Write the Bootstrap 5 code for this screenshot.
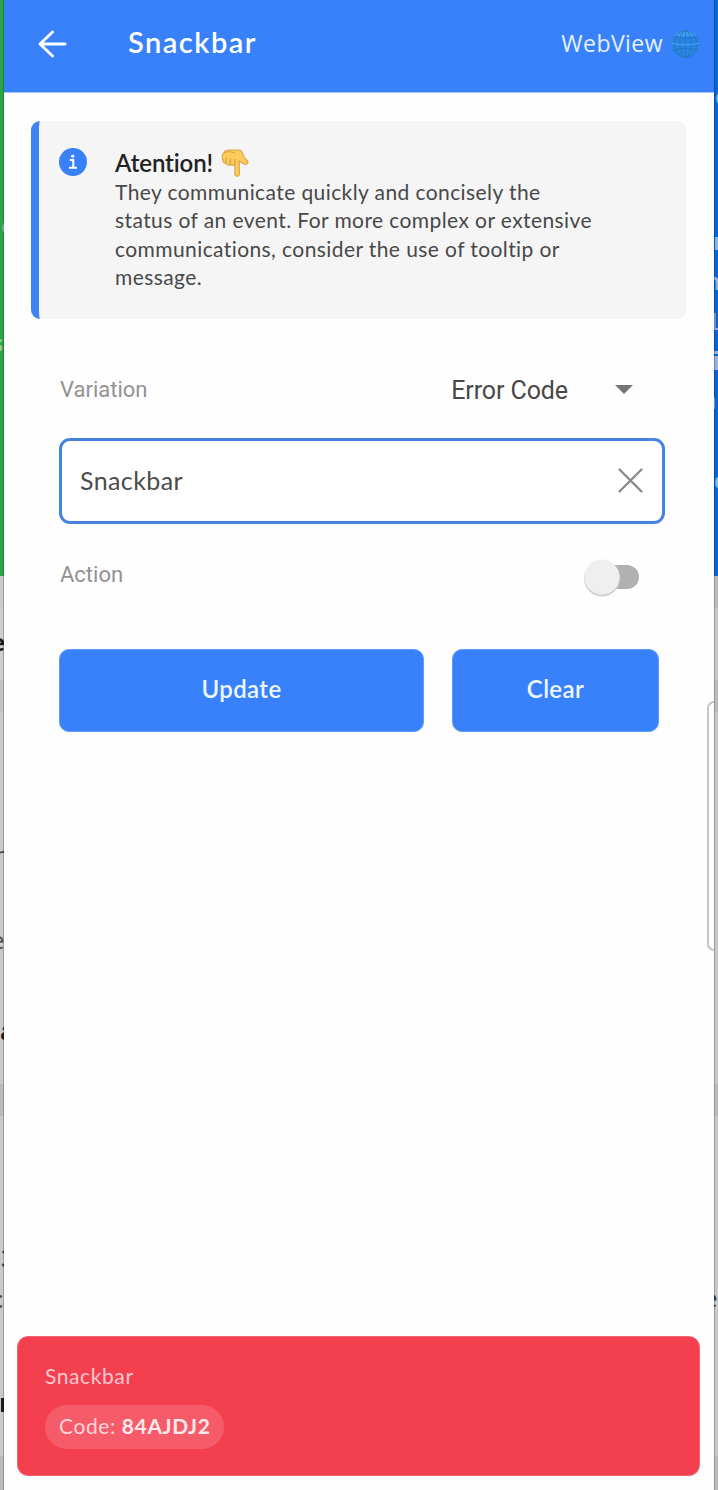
<!DOCTYPE html>
<html lang="en">
<head>
<meta charset="utf-8">
<meta name="viewport" content="width=device-width, initial-scale=1">
<title>Snackbar</title>
<link href="https://cdn.jsdelivr.net/npm/bootstrap@5.3.0/dist/css/bootstrap.min.css" rel="stylesheet">
<style>
body{font-family:Lato,"Open Sans",sans-serif;background:#fff;overflow:hidden}
svg{display:block;flex:none}
.shell{height:1490px}
.screen{min-width:0;background:#fefefe}
.top-bar{height:93px;background:#3881fb;border-bottom:1px solid #a3c9fd;padding:0 14px 5px 33px}
.top-title{font-size:29px;font-weight:600;letter-spacing:1.5px;line-height:36px;margin-left:61px;padding-bottom:3px}
.web-link{font-family:"Open Sans",sans-serif;font-size:23px;letter-spacing:.45px;color:#e4f1ff;line-height:32px;gap:8px}
.web-link span{padding-bottom:1px}
.notice{margin:28px 28px 0 27px;height:198px;background:#f5f5f5;border-left:8px solid #3d83f5;border-radius:9px;padding:27px 60px 0 20px;gap:28px}
.notice-title{font-size:24px;font-weight:600;line-height:30px;color:#222;letter-spacing:-.1px;gap:8px}
.notice-text{font-size:21px;line-height:28.3px;color:#484848;letter-spacing:.41px;white-space:nowrap}
.form-area{padding:0 49px 0 55px}
.device-label{font-family:Roboto,sans-serif;font-size:22px;line-height:30px;color:#929292;margin-left:1px}
.variation{margin-top:56px;height:30px;padding-right:32px}
.variation-value{font-family:Roboto,sans-serif;font-size:25px;color:#484848;line-height:30px;gap:47px;letter-spacing:-.1px}
.variation-value span{padding-top:1px}
.field{margin-top:33px;height:86px;border:3px solid #4583e0;border-radius:11px;padding:0 19px 0 18px;background:#fff}
.field span{font-size:25px;color:#4c4c4c;line-height:32px;letter-spacing:.4px;padding-bottom:3px}
.field svg{margin-bottom:1px}
.action-row{margin-top:32px;height:42px;padding-right:25px}
.buttons{margin-top:51px;gap:28px;padding-right:6px}
.buttons .btn{height:83px;border-radius:10px;background:#3881fb;color:#edf7ff;font-size:24px;font-weight:600;border:1px solid #5b9dfc;padding-bottom:9px;letter-spacing:.4px}
.btn-update{width:365px}.btn-clear{width:207px}
.toast-bar{margin:auto 14px 14px 13px;height:140px;background:#f43f4f;border:1px solid #ea6674;border-radius:11px;padding:24px 27px;color:#ffc7cf;font-size:21px}
.toast-bar p{line-height:30px;letter-spacing:.6px}
.code-pill{height:44px;margin-top:14px;padding:0 13px 2px 14px;border-radius:22px;background:#f65b69;color:#ffd3d9;white-space:nowrap;gap:6px;letter-spacing:.6px}
.code-pill b{color:#ffe9ec;font-weight:700}
.edge-handle{right:0;top:701px;width:7px;height:250px;border:2px solid #c4c4c4;border-right:0;border-radius:8px 0 0 8px;background:#fff}
</style>
</head>
<body>
<div class="shell d-flex">
  <svg width="4" height="1490" font-family="Open Sans, sans-serif" font-size="24">
    <rect width="4" height="1490" fill="#cacaca"/><rect width="4" height="576" fill="#2da446"/>
    <rect y="608" width="4" height="72" fill="#cecece"/><rect y="680" width="4" height="32" fill="#c2c2c2"/><rect y="1084" width="4" height="32" fill="#bcbcbc"/><rect y="1456" width="4" height="34" fill="#bcbcbc"/>
    <g fill="#9cc9a4"><text x="1" y="234">c</text><text x="-9" y="352" font-weight="700">s</text></g>
    <g fill="#1d1d1d" font-weight="700"><text x="-9" y="651">e</text><text x="0" y="1040">a</text><rect x="1" y="1398" width="3" height="14"/></g>
    <g fill="#4a4a4a"><text x="-5" y="864">n</text><text x="-9" y="949">e</text><text x="1" y="1267" font-weight="700">3</text><text x="-9" y="1308" font-weight="600">c</text></g>
    <rect x="3" width="1" height="1490" fill="#000" opacity=".22"/>
  </svg>
  <main class="screen d-flex flex-column flex-grow-1 position-relative">
    <header class="top-bar d-flex align-items-center text-white">
      <svg width="30" height="30" viewBox="0 0 30 30" fill="none" stroke="#fff" stroke-width="2.900" stroke-linecap="round" stroke-linejoin="round"><path d="M28 15H3M15.500 3 3 15l12.500 12"/></svg>
      <h1 class="top-title mb-0">Snackbar</h1>
      <div class="web-link d-flex align-items-center ms-auto"><span>WebView</span>
        <svg width="29" height="30" viewBox="0 0 30 30"><circle cx="15" cy="15" r="14.500" fill="#2a86e0"/><path d="M3 7a14.500 14.500 0 0 1 24 0z" fill="#3f9ff0"/><g fill="none" stroke="#2474ca" stroke-width="1"><ellipse cx="15" cy="15" rx="6" ry="14"/><ellipse cx="15" cy="15" rx="11.500" ry="14"/><path d="M15 1v28M3 7q12 5 24 0M2 22q13-5 26 0"/></g><path d="M1 14q14 4 28 0" fill="none" stroke="#48a8ee"/></svg>
      </div>
    </header>
    <section class="notice d-flex">
      <svg width="28" height="28" viewBox="0 0 28 28"><circle cx="14" cy="14" r="14" fill="#3881fb"/><circle cx="13.700" cy="8.200" r="1.600" fill="#fff"/><path d="M10.800 12h3.500v7.300M10 19.800h8" fill="none" stroke="#fff" stroke-width="2"/></svg>
      <div>
        <h2 class="notice-title d-flex align-items-center mb-0">Atention!
          <svg width="28" height="28" viewBox="0 0 28 28"><path d="M3 3.500Q4.500 1 8 1h9q3.500 0 4.500 3 .8 4 4.500 7.500 1.700 2 .3 3.300-2 1.200-5-.8l-3-2v13q0 2.200-2.200 2.200T13.900 25V15q-2 2-4.300.6Q7 17 5.200 14.500 2 14.500 1.800 11 .2 7 3 3.500z" fill="#fbcb5c" stroke="#dca64a" stroke-width="1.200"/><path d="M5.200 14.500q-1-3 .5-5.500M9.600 15.600q-1-3 .3-5.600M13.900 15q-.6-3 .5-5M3 3.500q6-1.800 11 .8" fill="none" stroke="#dfa03f" stroke-width="1.200"/></svg>
        </h2>
        <p class="notice-text mb-0">They communicate quickly and concisely the<br>status of an event. For more complex or extensive<br>communications, consider the use of tooltip or<br>message.</p>
      </div>
    </section>
    <div class="form-area">
      <div class="variation d-flex justify-content-between align-items-center">
        <span class="device-label">Variation</span>
        <div class="variation-value d-flex align-items-center"><span>Error Code</span><svg width="18" height="10" viewBox="0 0 18 10"><path d="M0 0h18l-9 9z" fill="#757575"/></svg></div>
      </div>
      <div class="field d-flex align-items-center justify-content-between"><span>Snackbar</span>
        <svg width="25" height="25" viewBox="0 0 25 25" fill="none" stroke="#8b8b8b" stroke-width="2.400" stroke-linecap="round"><path d="m1.500 1.500 22 22m0-22-22 22"/></svg>
      </div>
      <div class="action-row d-flex justify-content-between align-items-center">
        <span class="device-label mb-1">Action</span>
        <svg width="58" height="42" viewBox="0 0 58 42"><rect x="12" y="9" width="45" height="24" rx="12" fill="#b1b1b1"/><circle cx="20" cy="22.500" r="18" fill="#d2d2d2"/><circle cx="20" cy="21" r="17.500" fill="#efefef"/></svg>
      </div>
      <div class="buttons d-flex">
        <button class="btn btn-update" type="button">Update</button>
        <button class="btn btn-clear" type="button">Clear</button>
      </div>
    </div>
    <div class="toast-bar d-flex flex-column align-items-start">
      <p class="mb-0">Snackbar</p>
      <div class="code-pill d-flex align-items-center"><span>Code:</span><b>84AJDJ2</b></div>
    </div>
    <div class="edge-handle position-absolute"></div>
  </main>
  <svg width="4" height="1490" font-family="Open Sans, sans-serif" font-size="24">
    <rect width="4" height="1490" fill="#c9c9c9"/><rect width="4" height="576" fill="#0866d3"/>
    <rect y="576" width="4" height="32" fill="#bdbdbd"/><rect y="680" width="4" height="32" fill="#bdbdbd"/><rect y="1084" width="4" height="32" fill="#bcbcbc"/><rect y="1456" width="4" height="34" fill="#bcbcbc"/>
    <g fill="#91b5e3"><text x="1" y="105">c</text><text x="-1" y="250" font-weight="700">r</text><text x="-9" y="290" font-weight="600">n</text><text x="-3" y="330">L</text><path d="M0 351h4v3H0zM0 356h4v14H0zM0 398h1v11H0z"/><text x="0" y="489" font-weight="700">c</text></g>
    <text x="-10" y="1307" fill="#333">e</text>
    <rect width="1" height="1490" fill="#000" opacity=".22"/>
  </svg>
</div>
<script src="https://cdn.jsdelivr.net/npm/bootstrap@5.3.0/dist/js/bootstrap.bundle.min.js"></script>
</body>
</html>
